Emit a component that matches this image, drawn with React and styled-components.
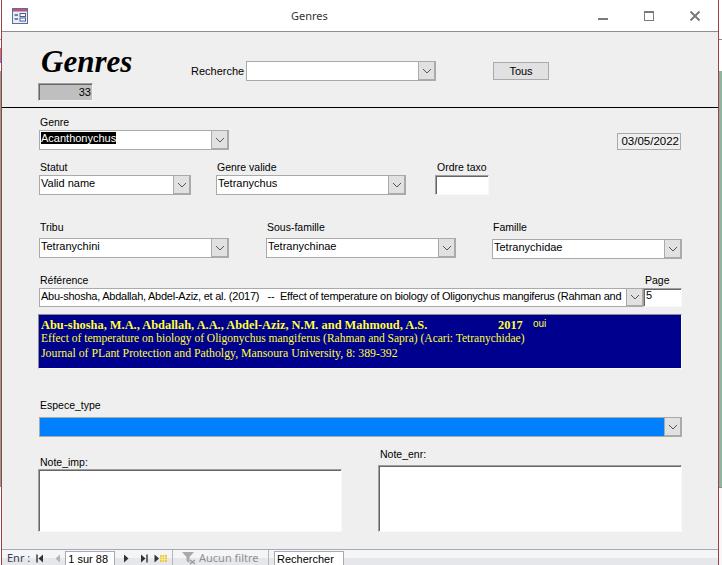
import React from "react";
import styled, { createGlobalStyle } from "styled-components";

const GlobalStyle = createGlobalStyle`
  html, body {
    margin: 0;
    padding: 0;
    width: 722px;
    height: 565px;
    overflow: hidden;
    background: #ffffff;
  }
  * { box-sizing: border-box; }
`;

const Desktop = styled.div`
  display: flex;
  width: 722px;
  height: 565px;
`;

const LeftEdge = styled.div`
  width: 1px;
  flex: none;
  background: linear-gradient(to bottom,
    #fff 0 39px, #999 39px 40px, #fff 40px 48px, #c9708f 48px 55px,
    #7d86c4 55px 63px, #fff 63px 71px, #7fa98f 71px 487px, #fff 487px);
`;

const RightEdge = styled.div`
  flex: 1;
  background: linear-gradient(to bottom,
    #fff 0 39px, #8e8e8e 39px 40px, #fff 40px 71px,
    #8fb59f 71px 487px, #8e8e8e 487px 488px, #f7f7f7 488px);
`;

const Access = styled.div`
  display: flex;
  flex-direction: column;
  width: 718px;
  height: 565px;
  flex: none;
  border-left: 1px solid #a33c44;
  border-right: 1px solid #a33c44;
  background: #efefef;
  font-family: "Liberation Sans", Arial, sans-serif;
  font-size: 11px;
  color: #000;
`;

const TitleBar = styled.div`
  position: relative;
  display: flex;
  align-items: center;
  height: 32px;
  flex: none;
  padding-left: 289px;
  background: #fff;
  border-bottom: 1px solid #8e8e8e;
`;

const TitleText = styled.span`
  font-family: "Noto Sans", sans-serif;
  font-size: 11px;
  color: #333;
`;

const AppIcon = styled.svg`
  position: absolute;
  left: 10px;
  top: 8px;
`;

const WindowButtons = styled.div`
  position: absolute;
  left: 596px;
  top: 11px;
  display: flex;
  gap: 36px;
`;

const Header = styled.div`
  display: flex;
  height: 76px;
  flex: none;
  padding-left: 36px;
  border-bottom: 1px solid #000;
`;

const Brand = styled.div`
  display: flex;
  flex-direction: column;
  width: 153px;
`;

const BigTitle = styled.div`
  margin: 14px 0 0 3px;
  height: 37px;
  font-family: "Liberation Serif", serif;
  font-size: 31px;
  line-height: 32px;
  font-weight: bold;
  font-style: italic;
`;

const Counter = styled.div`
  width: 55px;
  height: 18px;
  padding-right: 1px;
  text-align: right;
  line-height: 16px;
  background: #bfbfbf;
  border: 1px solid;
  border-color: #a0a0a0 #f5f5f5 #f5f5f5 #a0a0a0;
  box-shadow: inset 1px 1px 0 #666;
`;

const SearchRow = styled.div`
  display: flex;
  margin-top: 29px;
  align-items: flex-start;
`;

const SearchLabel = styled.label`
  width: 55px;
  margin-top: 4px;
`;

const ButtonTous = styled.button`
  width: 56px;
  height: 18px;
  margin: 1px 0 0 57px;
  padding: 0;
  border: 1px solid #aaa;
  background: #e1e1e1;
  font: inherit;
  color: #000;
`;

const Body = styled.div`
  flex: 1;
  display: flex;
  flex-direction: column;
  padding: 8px 36px 0 37px;
`;

const Row = styled.div`
  display: flex;
  align-items: flex-start;
  height: ${p => p.$h}px;
`;

const Field = styled.div`
  display: flex;
  flex-direction: column;
  width: ${p => p.$w}px;
  margin-left: ${p => p.$ml || 0}px;
  margin-top: ${p => p.$mt || 0}px;
`;

const Label = styled.label`
  height: ${p => p.$h || 14}px;
  padding-left: ${p => (p.$pl === undefined ? 1 : p.$pl)}px;
  font-size: 10.5px;
  line-height: 13px;
  white-space: nowrap;
`;

const ComboBox = styled.div`
  display: flex;
  width: 100%;
  height: ${p => p.$h || 20}px;
  background: ${p => p.$bg || "#fff"};
  border: 1px solid #aaa;
`;

const ComboValue = styled.div`
  flex: 1;
  min-width: 0;
  overflow: hidden;
  padding: 1px 0 0 1px;
  line-height: 13px;
  white-space: nowrap;
  font-size: 11px;
  letter-spacing: ${p => p.$track || 0}px;
`;

const Selected = styled.span`
  background: #000;
  color: #fff;
`;

const ComboArrow = styled.div`
  display: flex;
  align-items: center;
  justify-content: center;
  width: 17px;
  flex: none;
  background: #e1e1e1;
  border: 1px solid #aaa;
  border-width: 0 1px 1px 1px;
`;

const DateBox = styled.div`
  width: 64px;
  height: 17px;
  margin: 17px 1px 0 auto;
  padding-right: 1px;
  text-align: right;
  font-size: 11.5px;
  line-height: 15px;
  white-space: nowrap;
  border: 1px solid #aaa;
`;

const Sunken = styled.div`
  width: 100%;
  height: ${p => p.$h}px;
  padding-left: 2px;
  line-height: 13px;
  background: #fff;
  border: 1px solid;
  border-color: #a0a0a0 #f9f9f9 #f9f9f9 #a0a0a0;
  box-shadow: inset 1px 1px 0 #666;
`;

const RefPanel = styled.div`
  width: 644px;
  height: 55px;
  flex: none;
  margin-left: -1px;
  padding: 3px 0 0 2px;
  background: #00008f;
  border: 1px solid;
  border-color: #8a8a8a #fafafa #fafafa #8a8a8a;
  color: #ffff33;
  font-family: "Liberation Serif", serif;
`;

const RefAuthors = styled.div`
  display: flex;
  align-items: flex-start;
  height: 13px;
  font-size: 12.4px;
  font-weight: bold;
  line-height: 15px;
`;

const AuthorName = styled.span`
  width: 457px;
  white-space: nowrap;
`;

const RefYear = styled.span`
  width: 35px;
`;

const RefFlag = styled.span`
  font-family: "Liberation Sans", sans-serif;
  font-size: 10px;
  font-weight: normal;
  line-height: 11px;
`;

const RefLine = styled.div`
  height: ${p => p.$h}px;
  font-size: ${p => p.$fs}px;
  line-height: 14px;
  white-space: nowrap;
`;

const StatusBar = styled.div`
  display: flex;
  align-items: stretch;
  height: 16px;
  flex: none;
  overflow: hidden;
  border-top: 1px solid #a9a9b5;
  background: linear-gradient(to bottom, #f4f5f7 0 8px, #e6e7ea 8px);
  font-family: "Noto Sans", sans-serif;
  font-size: 11px;
  line-height: 16px;
  color: #222;
`;

const NavSection = styled.div`
  display: flex;
  align-items: center;
  height: 16px;
  padding-left: ${p => p.$pl}px;
  width: ${p => p.$w}px;
  flex: none;
  border-right: 1px solid #b6b6c0;
`;

const NavText = styled.span`
  margin-right: 6px;
  color: ${p => (p.$dim ? "#8f8f8f" : "#3a3a55")};
  white-space: nowrap;
`;

const NavIcon = styled.svg`
  flex: none;
  margin-right: ${p => p.$mr || 0}px;
`;

const NavInput = styled.div`
  align-self: flex-start;
  width: 50px;
  height: 15px;
  margin: 1px 8px 0 0;
  padding-left: 2px;
  background: #fff;
  border: 1px solid #a9a9b5;
  border-bottom: 0;
  color: #000;
  font-family: "Liberation Sans", sans-serif;
  font-size: 11px;
  line-height: 14px;
  flex: none;
`;

const SearchBox = styled.div`
  width: 70px;
  height: 15px;
  margin: 1px 0 0 5px;
  padding-left: 2px;
  background: #fff;
  border: 1px solid #a9a9b5;
  border-bottom: 0;
  color: #000;
  font-family: "Liberation Sans", sans-serif;
  font-size: 11px;
  line-height: 14px;
`;

const Chevron = () => (
  <svg width="10" height="6" viewBox="0 0 10 6">
    <path d="M1 1 L5 5 L9 1" fill="none" stroke="#555" strokeWidth="1" />
  </svg>
);

const Combo = ({ children, h, bg, track }) => (
  <ComboBox $h={h} $bg={bg}>
    <ComboValue $track={track}>{children}</ComboValue>
    <ComboArrow>
      <Chevron />
    </ComboArrow>
  </ComboBox>
);

const App = () => (
  <Desktop>
    <GlobalStyle />
    <LeftEdge />
    <Access>
      <TitleBar>
        <AppIcon width="16" height="16" viewBox="0 0 16 16">
          <rect x="0.5" y="0.5" width="15" height="15" fill="#e8edf7" stroke="#5b6f9a" />
          <rect x="1" y="1" width="14" height="2.5" fill="#c2527a" />
          <path d="M2.5 7H6M2.5 11H6" stroke="#4a5f8e" strokeWidth="1.4" />
          <rect x="8" y="5.5" width="5.5" height="3" fill="#fff" stroke="#4a5f8e" />
          <rect x="8" y="10" width="5.5" height="3" fill="#fff" stroke="#4a5f8e" />
        </AppIcon>
        <TitleText>Genres</TitleText>
        <WindowButtons>
          <svg width="10" height="10" viewBox="0 0 10 10">
            <rect x="0" y="7" width="10" height="2" fill="#7a7a7a" />
          </svg>
          <svg width="10" height="10" viewBox="0 0 10 10">
            <rect x="0.5" y="0.5" width="9" height="9" fill="none" stroke="#7a7a7a" />
            <rect x="0" y="0" width="10" height="2" fill="#7a7a7a" />
          </svg>
          <svg width="10" height="10" viewBox="0 0 10 10">
            <path d="M0.5 0.5 L9.5 9.5 M9.5 0.5 L0.5 9.5" stroke="#7a7a7a" strokeWidth="2" />
          </svg>
        </WindowButtons>
      </TitleBar>

      <Header>
        <Brand>
          <BigTitle>Genres</BigTitle>
          <Counter>33</Counter>
        </Brand>
        <SearchRow>
          <SearchLabel>Recherche</SearchLabel>
          <Field $w={190}>
            <Combo />
          </Field>
          <ButtonTous>Tous</ButtonTous>
        </SearchRow>
      </Header>

      <Body>
        <Row $h={45}>
          <Field $w={190}>
            <Label>Genre</Label>
            <Combo><Selected>Acanthonychus</Selected></Combo>
          </Field>
          <DateBox>03/05/2022</DateBox>
        </Row>
        <Row $h={60}>
          <Field $w={152}>
            <Label>Statut</Label>
            <Combo>Valid name</Combo>
          </Field>
          <Field $w={190} $ml={25}>
            <Label>Genre valide</Label>
            <Combo>Tetranychus</Combo>
          </Field>
          <Field $w={54} $ml={29}>
            <Label $pl={2}>Ordre taxo</Label>
            <Sunken $h={20} />
          </Field>
        </Row>
        <Row $h={53}>
          <Field $w={190}>
            <Label $h={17}>Tribu</Label>
            <Combo>Tetranychini</Combo>
          </Field>
          <Field $w={190} $ml={37}>
            <Label $h={17}>Sous-famille</Label>
            <Combo>Tetranychinae</Combo>
          </Field>
          <Field $w={190} $ml={36}>
            <Label $h={18}>Famille</Label>
            <Combo>Tetranychidae</Combo>
          </Field>
        </Row>
        <Row $h={40}>
          <Field $w={605}>
            <Label>Référence</Label>
            <Combo h={19} track={-0.25}>Abu-shosha, Abdallah, Abdel-Aziz, et al. (2017)&nbsp;&nbsp; --&nbsp; Effect of temperature on biology of Oligonychus mangiferus (Rahman and</Combo>
          </Field>
          <Field $w={39} $ml={-1}>
            <Label $pl={2}>Page</Label>
            <Sunken $h={19}>5</Sunken>
          </Field>
        </Row>
        <RefPanel>
          <RefAuthors>
            <AuthorName>Abu-shosha, M.A., Abdallah, A.A., Abdel-Aziz, N.M. and Mahmoud, A.S.</AuthorName>
            <RefYear>2017</RefYear>
            <RefFlag>oui</RefFlag>
          </RefAuthors>
          <RefLine $h={15} $fs={11.5}>Effect of temperature on biology of Oligonychus mangiferus (Rahman and Sapra) (Acari: Tetranychidae)</RefLine>
          <RefLine $h={14} $fs={11.8}>Journal of PLant Protection and Patholgy, Mansoura University, 8: 389-392</RefLine>
        </RefPanel>
        <Row $h={78}>
          <Field $w={643} $mt={30}>
            <Label $h={18}>Espece_type</Label>
            <Combo bg="#0080ff" />
          </Field>
        </Row>
        <Row $h={84}>
          <Field $w={304} $ml={-1} $mt={9}>
            <Label $h={13} $pl={2}>Note_imp:</Label>
            <Sunken $h={63} />
          </Field>
          <Field $w={304} $ml={36} $mt={1}>
            <Label $h={17} $pl={2}>Note_enr:</Label>
            <Sunken $h={67} />
          </Field>
        </Row>
      </Body>

      <StatusBar>
        <NavSection $w={171} $pl={5}>
          <NavText>Enr :</NavText>
          <NavIcon width="8" height="9" viewBox="0 0 8 9" $mr={11}>
            <path d="M1 0.5V8.5" stroke="#333" strokeWidth="1.4" />
            <path d="M7 0.5V8.5L2.5 4.5Z" fill="#333" />
          </NavIcon>
          <NavIcon width="6" height="9" viewBox="0 0 6 9" $mr={4}>
            <path d="M5 0.5V8.5L0.5 4.5Z" fill="#b5b5b5" />
          </NavIcon>
          <NavInput>1 sur 88</NavInput>
          <NavIcon width="6" height="9" viewBox="0 0 6 9" $mr={11}>
            <path d="M1 0.5V8.5L5.5 4.5Z" fill="#333" />
          </NavIcon>
          <NavIcon width="8" height="9" viewBox="0 0 8 9" $mr={6}>
            <path d="M1 0.5V8.5L5.5 4.5Z" fill="#333" />
            <path d="M7 0.5V8.5" stroke="#333" strokeWidth="1.4" />
          </NavIcon>
          <NavIcon width="13" height="9" viewBox="0 0 13 9">
            <path d="M0.5 0.5V8.5L5 4.5Z" fill="#333" />
            <rect x="6" y="1" width="7" height="7" fill="#e9c94a" />
            <path d="M8.3 1V8M10.6 1V8M6 3.3H13M6 5.6H13" stroke="#fff3b0" strokeWidth="0.7" />
          </NavIcon>
        </NavSection>
        <NavSection $w={96} $pl={8}>
          <NavIcon width="16" height="14" viewBox="0 0 16 14" $mr={2}>
            <path d="M1 1H13L8.5 6V12L5.5 10V6Z" fill="#a9a9a9" />
            <path d="M9 9L14 13M14 9L9 13" stroke="#9a9a9a" strokeWidth="1.5" />
          </NavIcon>
          <NavText $dim>Aucun filtre</NavText>
        </NavSection>
        <SearchBox>Rechercher</SearchBox>
      </StatusBar>
    </Access>
    <RightEdge />
  </Desktop>
);

export default App;
